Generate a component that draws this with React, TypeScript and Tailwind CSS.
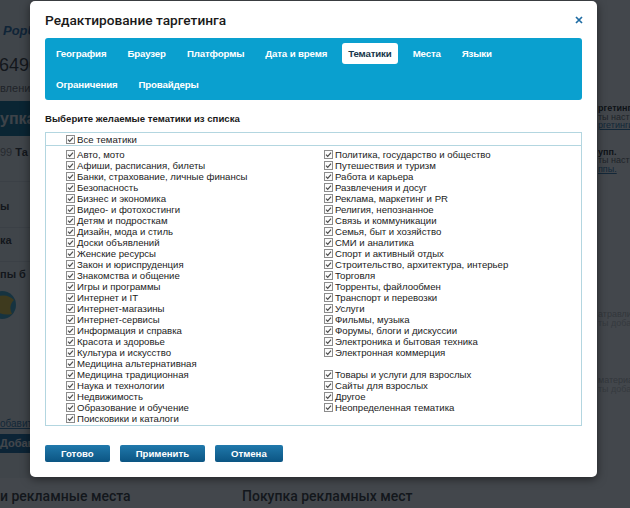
import React from "react";

const leftTopics = [
  "Авто, мото",
  "Афиши, расписания, билеты",
  "Банки, страхование, личные финансы",
  "Безопасность",
  "Бизнес и экономика",
  "Видео- и фотохостинги",
  "Детям и подросткам",
  "Дизайн, мода и стиль",
  "Доски объявлений",
  "Женские ресурсы",
  "Закон и юриспруденция",
  "Знакомства и общение",
  "Игры и программы",
  "Интернет и IT",
  "Интернет-магазины",
  "Интернет-сервисы",
  "Информация и справка",
  "Красота и здоровье",
  "Культура и искусство",
  "Медицина альтернативная",
  "Медицина традиционная",
  "Наука и технологии",
  "Недвижимость",
  "Образование и обучение",
  "Поисковики и каталоги",
];

// пустая строка перед "взрослыми" темами
const rightTopics = [
  "Политика, государство и общество",
  "Путешествия и туризм",
  "Работа и карьера",
  "Развлечения и досуг",
  "Реклама, маркетинг и PR",
  "Религия, непознанное",
  "Связь и коммуникации",
  "Семья, быт и хозяйство",
  "СМИ и аналитика",
  "Спорт и активный отдых",
  "Строительство, архитектура, интерьер",
  "Торговля",
  "Торренты, файлообмен",
  "Транспорт и перевозки",
  "Услуги",
  "Фильмы, музыка",
  "Форумы, блоги и дискуссии",
  "Электроника и бытовая техника",
  "Электронная коммерция",
  "",
  "Товары и услуги для взрослых",
  "Сайты для взрослых",
  "Другое",
  "Неопределенная тематика",
];

const tabsRow1 = ["География", "Браузер", "Платформы", "Дата и время", "Тематики", "Места", "Языки"];
const tabsRow2 = ["Ограничения", "Провайдеры"];

function Check() {
  return (
    <svg width="9" height="9" viewBox="0 0 9 9" className="shrink-0">
      <rect x="0.5" y="0.5" width="8" height="8" fill="#fbfbfb" stroke="#8c8c8c" />
      <path d="M2 4.6 L3.7 6.3 L7 2.7" fill="none" stroke="#4a4a4a" strokeWidth="1.2" />
    </svg>
  );
}

function Topic({ label }: { label: string }) {
  if (!label) return <div className="h-[11px]" />;
  return (
    <label className="flex h-[11px] items-center gap-[2px] whitespace-nowrap text-[9.6px] leading-[11px] text-[#222]">
      <Check />
      <span>{label}</span>
    </label>
  );
}

function Tab({ label, active }: { label: string; active?: boolean }) {
  return (
    <button
      className={`h-[21px] rounded-[3px] px-[6px] text-[9.7px] font-bold leading-[21px] tracking-[-0.15px] ${
        active ? "bg-white text-[#17364a]" : "text-white"
      }`}
    >
      {label}
    </button>
  );
}

function Btn({ children }: { children: React.ReactNode }) {
  return (
    <button className="h-[17px] rounded-[2px] bg-gradient-to-b from-[#2079ac] to-[#0b5583] px-[16px] text-[9.6px] font-bold leading-[17px] text-white">
      {children}
    </button>
  );
}

export default function App() {
  return (
    <div className="relative h-[508px] w-[630px] overflow-hidden bg-white font-[Liberation_Sans,Arial,sans-serif]">
      {/* страница под модальным окном */}
      <div className="flex flex-col">
        <div className="flex h-[478px]">
          {/* левая колонка */}
          <aside className="flex w-[30px] shrink-0 flex-col overflow-hidden bg-[#f3f5f6]">
            <div className="h-[22px]" />
            <div className="h-[18px] whitespace-nowrap pl-[3px] text-[13px] font-bold italic leading-[18px] text-[#1f6aa6]">
              PopUnder
            </div>
            <div className="h-[14px]" />
            <div className="-ml-[1px] h-[22px] whitespace-nowrap text-[18px] leading-[22px] text-[#333]">64900</div>
            <div className="h-[6px]" />
            <div className="h-[12px] whitespace-nowrap text-[11px] leading-[12px] text-[#666]">вление</div>
            <div className="h-[7px]" />
            <div className="flex h-[35px] items-center whitespace-nowrap bg-[#0b6d93] text-[16px] font-bold text-[#e6eef2]">
              упка
            </div>
            <div className="h-[10px]" />
            <div className="h-[12px] whitespace-nowrap text-[11px] leading-[12px] text-[#888]">
              99 <b className="text-[#333]">Та</b>
            </div>
            <div className="h-[24px] border-b border-[#dde2e5]" />
            <div className="h-[18px]" />
            <div className="h-[12px] whitespace-nowrap text-[11px] font-bold leading-[12px] text-[#333]">ы</div>
            <div className="h-[16px] border-b border-[#dde2e5]" />
            <div className="h-[6px]" />
            <div className="h-[12px] whitespace-nowrap text-[11px] font-bold leading-[12px] text-[#333]">ка</div>
            <div className="h-[16px] border-b border-[#dde2e5]" />
            <div className="h-[6px]" />
            <div className="h-[12px] whitespace-nowrap text-[11px] font-bold leading-[12px] text-[#333]">пы б</div>
            <div className="h-[10px]" />
            <svg width="30" height="30" viewBox="0 0 30 30" className="shrink-0">
              <circle cx="2" cy="15" r="14" fill="#3ea7c9" />
              <path d="M-6 8 Q6 2 14 10 Q8 16 12 24 Q2 26 -6 20 Z" fill="#e8c53a" />
            </svg>
            <div className="h-[98px]" />
            <div className="h-[12px] whitespace-nowrap text-[10px] leading-[12px] text-[#2f77a8] underline">обавить</div>
            <div className="h-[4px]" />
            <div className="flex h-[19px] items-center whitespace-nowrap bg-[#1468a0] text-[11px] font-bold text-white">
              Добавить
            </div>
          </aside>

          <main className="flex-1" />

          {/* правая колонка */}
          <aside className="flex w-[32px] shrink-0 flex-col overflow-hidden text-[9px] leading-[8.5px]">
            <div className="h-[104px]" />
            <div className="h-[8.5px] whitespace-nowrap font-bold text-[#222]">ргетинга</div>
            <div className="h-[8.5px] whitespace-nowrap text-[#666]">ты настройки</div>
            <div className="h-[8.5px] whitespace-nowrap text-[#2f77a8] underline">ргетинги.</div>
            <div className="h-[18px]" />
            <div className="h-[8.5px] whitespace-nowrap font-bold text-[#222]">упп.</div>
            <div className="h-[8.5px] whitespace-nowrap text-[#666]">ты настройки</div>
            <div className="h-[8.5px] whitespace-nowrap text-[#2f77a8] underline">ппы.</div>
            <div className="h-[137px]" />
            <div className="h-[9px] whitespace-nowrap text-[#b8b8b8]">атравлив</div>
            <div className="h-[9px] whitespace-nowrap text-[#c4c4c4]">ты добавить</div>
            <div className="h-[48px]" />
            <div className="h-[9px] whitespace-nowrap text-[#b8b8b8]">материал</div>
            <div className="h-[9px] whitespace-nowrap text-[#c4c4c4]">ты добавить</div>
          </aside>
        </div>

        <div className="mt-[3px] flex h-[30px] items-center whitespace-nowrap font-[Roboto,sans-serif] text-[14px] font-medium text-[#333]">
          <div className="w-[242px] shrink-0">и рекламные места</div>
          <div>Покупка рекламных мест</div>
        </div>
      </div>

      {/* затемнение */}
      <div className="absolute inset-0 bg-[rgba(10,16,22,0.77)]" />

      {/* модальное окно */}
      <div className="absolute left-[30px] top-[1px] flex h-[476px] w-[567px] flex-col rounded-[5px] bg-white px-[15px] shadow-[0_2px_10px_rgba(0,0,0,0.5)]">
        <div className="flex h-[37px] items-start justify-between pt-[11px]">
          <h2 className="font-[Roboto,sans-serif] text-[13.7px] font-medium leading-[16px] text-[#1a1a1a]">
            Редактирование таргетинга
          </h2>
          <button className="mr-[-1px] mt-[4px]">
            <svg width="8" height="8" viewBox="0 0 8 8">
              <path d="M1 1 L7 7 M7 1 L1 7" stroke="#1f6ca3" strokeWidth="1.7" />
            </svg>
          </button>
        </div>

        <nav className="flex h-[62px] flex-col gap-[10px] rounded-[3px] bg-[#0aa0cf] p-[5px]">
          <div className="flex gap-[9px]">
            {tabsRow1.map((t) => (
              <Tab key={t} label={t} active={t === "Тематики"} />
            ))}
          </div>
          <div className="flex gap-[9px]">
            {tabsRow2.map((t) => (
              <Tab key={t} label={t} />
            ))}
          </div>
        </nav>

        <p className="mt-[12px] h-[13px] text-[9.6px] font-bold leading-[13px] text-[#1a1a1a]">
          Выберите желаемые тематики из списка
        </p>

        <div className="mt-[7px] border border-[#b3d6e0] pb-[1px]">
          <div className="flex h-[13px] items-center border-b border-[#b3d6e0] pl-[20px]">
            <Topic label="Все тематики" />
          </div>
          <div className="grid grid-cols-[258px_1fr] pl-[20px] pt-[3px]">
            <div className="flex flex-col">
              {leftTopics.map((t) => (
                <Topic key={t} label={t} />
              ))}
            </div>
            <div className="flex flex-col">
              {rightTopics.map((t, i) => (
                <Topic key={i} label={t} />
              ))}
            </div>
          </div>
        </div>

        <div className="mt-[19px] flex gap-[10px]">
          <Btn>Готово</Btn>
          <Btn>Применить</Btn>
          <Btn>Отмена</Btn>
        </div>
      </div>
    </div>
  );
}
